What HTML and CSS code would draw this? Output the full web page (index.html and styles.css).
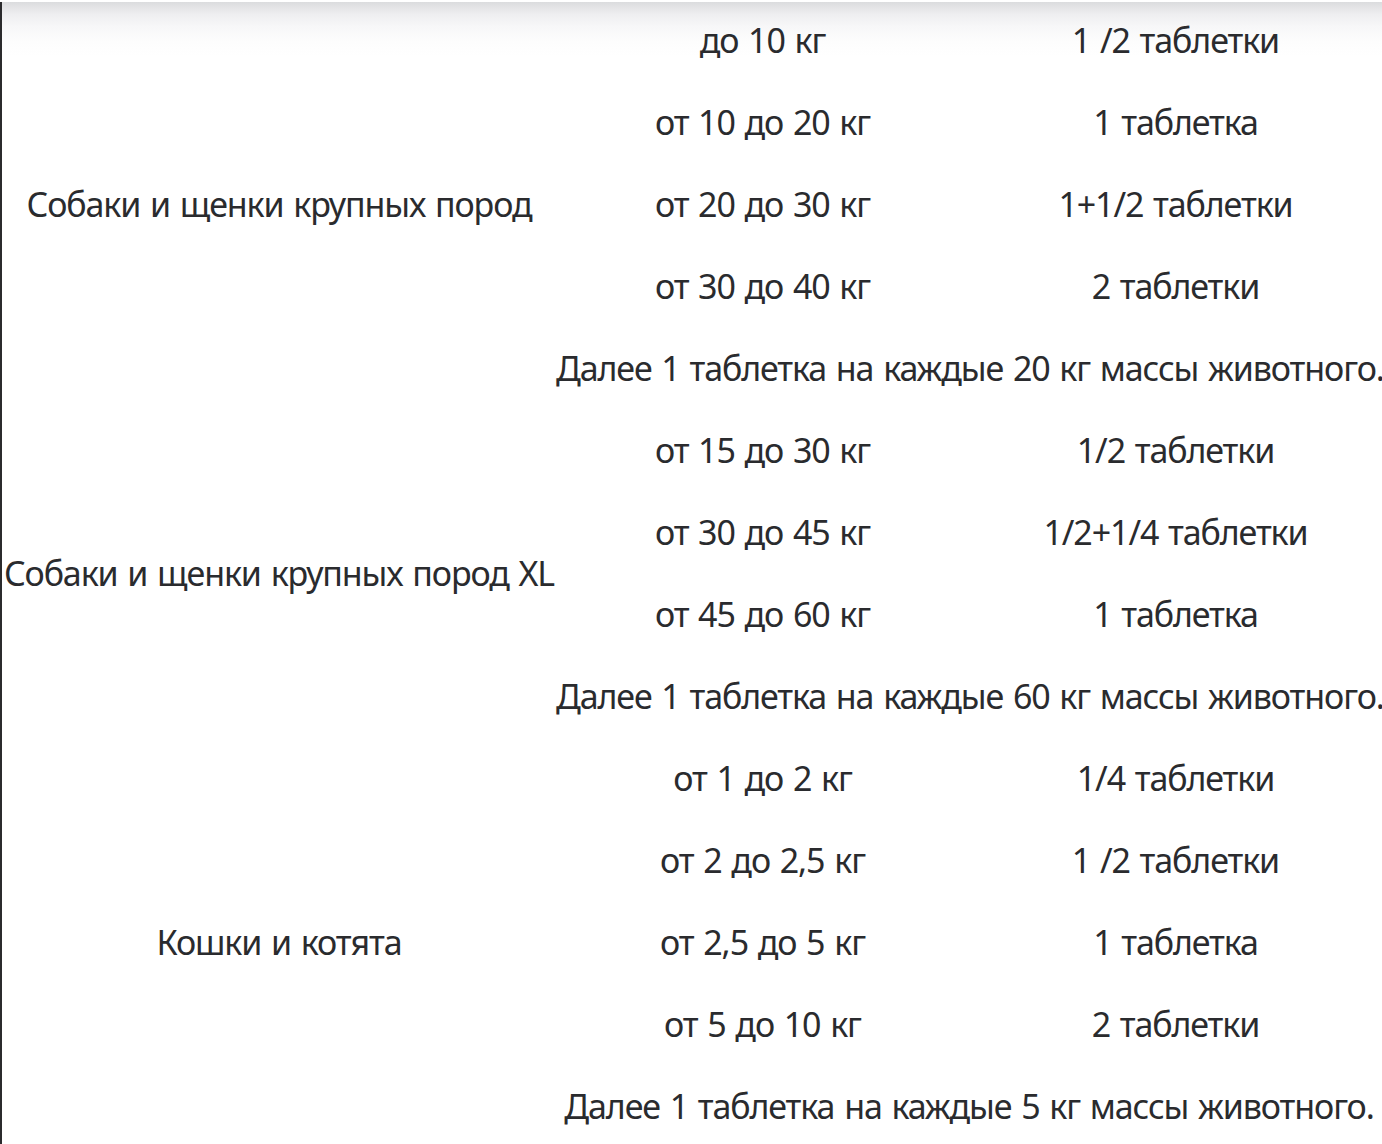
FILE: index.html
```html
<!DOCTYPE html>
<html lang="ru">
<head>
<meta charset="utf-8">
<title>Дозировка</title>
<link rel="stylesheet" href="styles.css">
</head>
<body>
<div class="wrap">
  <table class="dose">
    <colgroup>
      <col class="c-animal">
      <col class="c-weight">
      <col class="c-dose">
    </colgroup>
    <tbody>
      <tr>
        <td rowspan="5">Собаки и щенки крупных пород</td>
        <td>до 10 кг</td>
        <td>1 /2 таблетки</td>
      </tr>
      <tr><td>от 10 до 20 кг</td><td>1 таблетка</td></tr>
      <tr><td>от 20 до 30 кг</td><td>1+1/2 таблетки</td></tr>
      <tr><td>от 30 до 40 кг</td><td>2 таблетки</td></tr>
      <tr><td colspan="2">Далее 1 таблетка на каждые 20 кг массы животного.</td></tr>
      <tr>
        <td rowspan="4">Собаки и щенки крупных пород XL</td>
        <td>от 15 до 30 кг</td>
        <td>1/2 таблетки</td>
      </tr>
      <tr><td>от 30 до 45 кг</td><td>1/2+1/4 таблетки</td></tr>
      <tr><td>от 45 до 60 кг</td><td>1 таблетка</td></tr>
      <tr><td colspan="2">Далее 1 таблетка на каждые 60 кг массы животного.</td></tr>
      <tr>
        <td rowspan="5">Кошки и котята</td>
        <td>от 1 до 2 кг</td>
        <td>1/4 таблетки</td>
      </tr>
      <tr><td>от 2 до 2,5 кг</td><td>1 /2 таблетки</td></tr>
      <tr><td>от 2,5 до 5 кг</td><td>1 таблетка</td></tr>
      <tr><td>от 5 до 10 кг</td><td>2 таблетки</td></tr>
      <tr><td colspan="2">Далее 1 таблетка на каждые 5 кг массы животного.</td></tr>
    </tbody>
  </table>
</div>
</body>
</html>
```
FILE: styles.css
```css
html, body {
  margin: 0;
  padding: 0;
  background: #ffffff;
}

.wrap {
  position: relative;
  padding-left: 2px;
  background: linear-gradient(to bottom, #ffffff 0, #ffffff 2px, #dbdcde 2px, #eeeef0 14px, #f7f7f8 26px, #fdfdfd 42px, #ffffff 56px) no-repeat top left / 100% 60px;
}

.wrap::before {
  content: "";
  position: absolute;
  left: 0;
  top: 2px;
  bottom: 0;
  width: 2px;
  background: #2b2b2d;
}

.dose {
  width: 1380px;
  table-layout: fixed;
  border-collapse: collapse;
  border-spacing: 0;
  font-family: "Noto Sans", "Open Sans", sans-serif;
  font-size: 34px;
  letter-spacing: -1.1px;
  word-spacing: 2px;
  color: #2a2b2e;
}

.c-animal { width: 554px; }
.c-weight { width: 413px; }
.c-dose { width: 413px; }

.dose td {
  height: 82px;
  padding: 0 0 2px;
  box-sizing: border-box;
  text-align: center;
  vertical-align: middle;
  white-space: nowrap;
  line-height: 40px;
}
```
